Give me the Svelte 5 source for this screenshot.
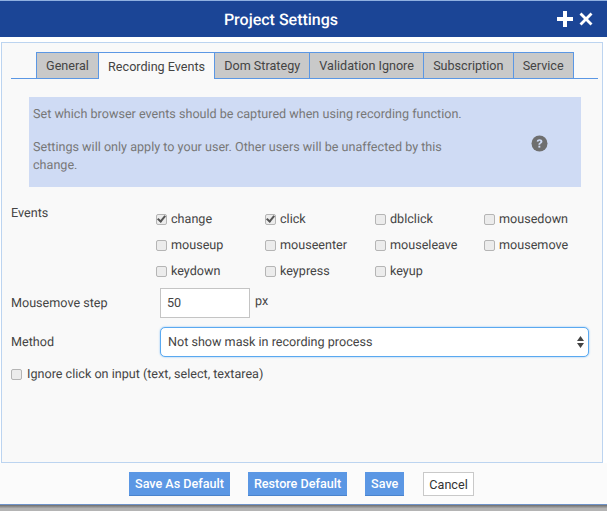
<script>
    const tabs = ['General', 'Recording Events', 'Dom Strategy', 'Validation Ignore', 'Subscription', 'Service'];
    const activeTab = 'Recording Events';

    const events = [
        { name: 'change', checked: true },
        { name: 'click', checked: true },
        { name: 'dblclick', checked: false },
        { name: 'mousedown', checked: false },
        { name: 'mouseup', checked: false },
        { name: 'mouseenter', checked: false },
        { name: 'mouseleave', checked: false },
        { name: 'mousemove', checked: false },
        { name: 'keydown', checked: false },
        { name: 'keypress', checked: false },
        { name: 'keyup', checked: false }
    ];
</script>

<div class="dialog">
    <header class="title-bar">
        <h1>Project Settings</h1>
        <div class="title-icons">
            <svg width="16" height="16" viewBox="0 0 16 16"><path d="M6 0h4v6h6v4h-6v6H6v-6H0V6h6z" fill="#fff"/></svg>
            <svg width="14" height="14" viewBox="0 0 14 14"><path d="M2.500 0.500L7 5l4.500-4.500 2 2L9 7l4.500 4.500-2 2L7 9l-4.500 4.500-2-2L5 7 .5 2.500z" fill="#fff"/></svg>
        </div>
    </header>

    <main class="panel">
        <nav class="tabs">
            {#each tabs as tab}
                <button class="tab" class:active={tab === activeTab}>{tab}</button>
            {/each}
        </nav>

        <section class="info">
            <div class="info-text">
                <p>Set which browser events should be captured when using recording function.</p>
                <p>Settings will only apply to your user. Other users will be unaffected by this change.</p>
            </div>
            <svg class="help" width="17" height="17" viewBox="0 0 17 17">
                <circle cx="8.500" cy="8.500" r="8" fill="#6f6f6f"/>
                <path d="M5.700 6.500c.2-1.500 1.300-2.300 2.900-2.300 1.600 0 2.800.9 2.800 2.300 0 1.100-.7 1.600-1.400 2.100-.5.300-.8.600-.8 1.100H7.400c0-1 .4-1.500 1.100-2 .5-.3.900-.6.900-1.100 0-.5-.4-.8-.9-.8-.6 0-1 .3-1.100 1z" fill="#cfdbf4"/>
                <rect x="7.400" y="10.700" width="1.900" height="1.900" fill="#cfdbf4"/>
            </svg>
        </section>

        <div class="row events-row">
            <span class="label events-label">Events</span>
            <div class="events">
                {#each events as event}
                    <label class="check">
                        <input type="checkbox" checked={event.checked} />
                        <span>{event.name}</span>
                    </label>
                {/each}
            </div>
        </div>

        <div class="row step-row">
            <label class="label" for="step">Mousemove step</label>
            <input id="step" class="step-input" type="text" value="50" />
            <span class="unit">px</span>
        </div>

        <div class="row method-row">
            <label class="label" for="method">Method</label>
            <div class="method">
                <span>Not show mask in recording process</span>
                <svg width="7" height="12" viewBox="0 0 7 12">
                    <path d="M3.500 0L7 5H0zM0 7h7l-3.500 5z" fill="#444"/>
                </svg>
            </div>
        </div>

        <label class="check ignore">
            <input type="checkbox" />
            <span>Ignore click on input (text, select, textarea)</span>
        </label>
    </main>

    <footer class="actions">
        <button class="btn primary">Save As Default</button>
        <button class="btn primary">Restore Default</button>
        <button class="btn primary">Save</button>
        <button class="btn cancel">Cancel</button>
    </footer>
    <div class="shade"></div>
</div>

<style>
    :global(body) {
        margin: 0;
        background: #fff;
    }

    .dialog {
        width: 607px;
        height: 511px;
        display: flex;
        flex-direction: column;
        font-family: Roboto, "Liberation Sans", sans-serif;
        font-size: 12.6px;
        text-rendering: geometricPrecision;
        color: #444;
        background: #fff;
        border-top: 1px solid #8fb0e0;
        box-sizing: border-box;
        overflow: hidden;
    }

    .title-bar {
        height: 36px;
        flex: none;
        background: #1b4596;
        color: #fff;
        display: flex;
        align-items: center;
        justify-content: center;
        padding-right: 45px;
        position: relative;
    }

    .title-bar h1 {
        margin: 0;
        font-size: 16px;
        font-weight: 500;
    }

    .title-icons {
        position: absolute;
        right: 14px;
        top: 10px;
        display: flex;
        align-items: center;
        gap: 6px;
    }

    .panel {
        margin: 5px 4px 0 1px;
        height: 421px;
        flex: none;
        box-sizing: border-box;
        border: 1px solid #bcd4f0;
        background: #f9f9f9;
        padding: 9px 4px 0 9px;
    }

    .tabs {
        display: flex;
        height: 27px;
        box-sizing: border-box;
        padding-left: 25px;
        border-bottom: 1px solid #5b97e4;
    }

    .tab {
        height: 26px;
        padding: 0 9.1px;
        box-sizing: border-box;
        border: 1px solid #5b97e4;
        border-bottom: none;
        margin-right: -1px;
        background: #c9c9c9;
        font: inherit;
        color: #444;
        white-space: nowrap;
    }

    .tab.active {
        height: 27px;
        background: #f9f9f9;
        position: relative;
        z-index: 1;
    }

    .info {
        margin: 18px 17px 0 18px;
        height: 90px;
        box-sizing: border-box;
        background: #cfdbf4;
        padding: 9px 33px 0 4px;
        display: flex;
        justify-content: space-between;
        align-items: flex-start;
        color: #777;
        line-height: 18px;
    }

    .info-text {
        width: 425px;
    }

    .info-text p {
        margin: 0 0 15px;
    }

    .info-text p:first-child {
        white-space: nowrap;
    }

    .help {
        margin-top: 29px;
    }

    .row {
        display: flex;
    }

    .label {
        width: 149px;
        flex: none;
    }

    .events-label {
        width: 145px;
    }

    .events-row {
        margin-top: 19px;
    }

    .events {
        display: grid;
        grid-template-columns: 109px 110px 109px auto;
        grid-auto-rows: 26px;
    }

    .events .check input {
        margin-right: 4px;
    }

    .check {
        display: flex;
        align-items: center;
        height: 26px;
        color: #444;
    }

    .check input {
        appearance: none;
        width: 9px;
        height: 9px;
        margin: 0 5px 0 0;
        border: 1px solid #b5b5b5;
        border-radius: 2px;
        background: #ececec;
        position: relative;
        box-sizing: content-box;
    }

    .check input:checked::after {
        content: "";
        position: absolute;
        left: 2px;
        top: -1px;
        width: 3px;
        height: 6px;
        border: solid #555;
        border-width: 0 2px 2px 0;
        transform: rotate(40deg);
    }

    .step-row {
        margin-top: 4px;
        align-items: center;
        height: 30px;
    }

    .step-input {
        width: 90px;
        height: 30px;
        box-sizing: border-box;
        border: 1px solid #c4c4c4;
        background: #fff;
        font: inherit;
        color: #444;
        padding: 0 6px 2px;
        outline: none;
    }

    .unit {
        margin: -4px 0 0 5px;
    }

    .method-row {
        margin-top: 9px;
        align-items: center;
        height: 30px;
    }

    .method {
        width: 429px;
        height: 30px;
        box-sizing: border-box;
        border: 1px solid #5aa9f0;
        border-radius: 5px;
        box-shadow: 0 0 2px #7dbcf5;
        background: #fff;
        display: flex;
        align-items: center;
        justify-content: space-between;
        padding: 0 4px 0 7px;
    }

    .ignore {
        margin-top: 4px;
    }

    .actions {
        flex: 1;
        display: flex;
        align-items: flex-start;
        gap: 18px;
        padding: 9px 0 0 129px;
        background: #fbfbfb;
    }

    .shade {
        height: 7px;
        flex: none;
        box-sizing: border-box;
        border-top: 1px solid #6f93c8;
        background: linear-gradient(#6e6e6e, #b4b4b4 60%);
    }

    .btn {
        height: 24px;
        padding: 0 6px;
        font: inherit;
        white-space: nowrap;
    }

    .primary {
        border: none;
        border-bottom: 1px solid #4a83cc;
        background: #5b97e4;
        color: #fff;
        font-weight: 500;
    }

    .cancel {
        border: 1px solid #c9c9c9;
        background: #fff;
        color: #333;
        padding: 0 5.5px;
        margin-left: 0.5px;
    }
</style>
